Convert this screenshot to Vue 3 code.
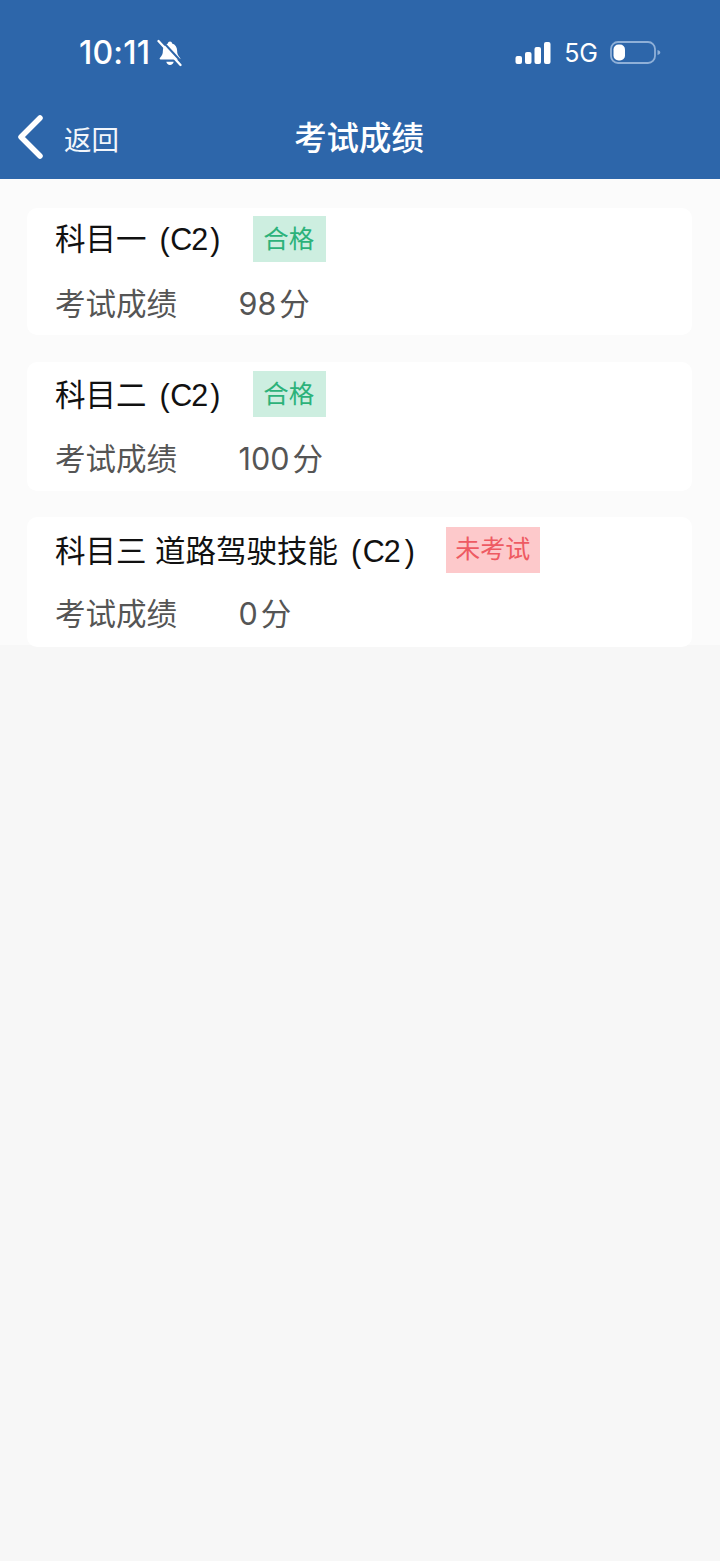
<script setup>
const items = [
  { name: '科目一', tag: '合格', ok: true, score: '98' },
  { name: '科目二', tag: '合格', ok: true, score: '100' },
  { name: '科目三 道路驾驶技能', tag: '未考试', ok: false, score: '0' },
]
</script>

<template>
  <div class="page">
    <header class="head">
      <div class="status">
        <div class="status-left">
          <span class="time">10:11</span>
          <svg class="bell" width="26" height="28" viewBox="0 0 26 28">
            <path d="M13 2.500c1.200 0 2 .8 2.100 1.900 3.400 1 5 3.600 5 7.200 0 3.600 1 5.300 3 7.400.6.700.2 1.500-.7 1.500H3.600c-.9 0-1.300-.8-.7-1.500 2-2.100 3-3.800 3-7.400 0-3.600 1.600-6.200 5-7.200C11 3.300 11.800 2.500 13 2.500z" fill="#fff"/>
            <path d="M9.300 22.800h7.400c-.3 1.900-1.800 3.200-3.700 3.200s-3.400-1.300-3.700-3.200z" fill="#fff"/>
            <path d="M3.800 0.500 25.500 24" stroke="#2d66aa" stroke-width="2"/>
            <path d="M1.500 2 23.500 26" stroke="#fff" stroke-width="2.300" stroke-linecap="round"/>
          </svg>
        </div>
        <div class="status-right">
          <svg class="signal" width="36" height="22" viewBox="0 0 36 22">
            <rect x="0.500" y="14" width="6.500" height="8" rx="2" fill="#fff"/>
            <rect x="10" y="10" width="6.500" height="12" rx="2" fill="#fff"/>
            <rect x="19.500" y="5" width="6.500" height="17" rx="2" fill="#fff"/>
            <rect x="29" y="0" width="6.500" height="22" rx="2" fill="#fff"/>
          </svg>
          <span class="net">5G</span>
          <svg class="batt" width="52" height="26" viewBox="0 0 52 26">
            <rect x="1" y="2" width="44" height="21" rx="7" fill="none" stroke="#8fb0d8" stroke-width="1.800"/>
            <rect x="3.500" y="4.500" width="11.500" height="16" rx="5" fill="#fff"/>
            <path d="M47.500 10c1.800.6 2.800 1.500 2.800 2.500s-1 1.900-2.800 2.500z" fill="#8fb0d8"/>
          </svg>
        </div>
      </div>
      <div class="nav">
        <div class="back">
          <svg width="30" height="48" viewBox="0 0 30 48">
            <path d="M25 6 6 25 25 44" fill="none" stroke="#fff" stroke-width="5.500" stroke-linecap="round" stroke-linejoin="round"/>
          </svg>
          <span class="back-text">返回</span>
        </div>
        <h1 class="title">考试成绩</h1>
      </div>
    </header>

    <main class="list">
      <section v-for="item in items" :key="item.name" class="card">
        <div class="row-top">
          <span class="name">{{ item.name }}<span class="paren-l">(</span><span class="grade">C2</span><span class="paren-r">)</span></span>
          <span class="tag" :class="item.ok ? 'tag-ok' : 'tag-no'">{{ item.tag }}</span>
        </div>
        <div class="row-score">
          <span class="label">考试成绩</span>
          <span class="score"><span class="num">{{ item.score }}</span>分</span>
        </div>
      </section>
    </main>
  </div>
</template>

<style>
html, body { margin: 0; background: #f7f7f7; }
</style>

<style scoped>
.page {
  width: 720px;
  height: 1561px;
  overflow: hidden;
  background: #f7f7f7;
  font-family: "Noto Sans CJK SC", "Liberation Sans", sans-serif;
  display: flex;
  flex-direction: column;
}
.head {
  height: 179px;
  flex: none;
  background: #2d66aa;
  color: #fff;
}
.status {
  height: 94px;
  padding: 33px 58px 0 79px;
  box-sizing: border-box;
  display: flex;
  justify-content: space-between;
  align-items: flex-start;
}
.status-left, .status-right { display: flex; align-items: center; height: 40px; }
.time {
  font-family: Inter, "Liberation Sans", sans-serif;
  font-size: 32px;
  font-weight: 500;
  letter-spacing: 0.200px;
  line-height: 40px;
}
.bell { margin-left: 7px; }
.net {
  font-family: Inter, "Liberation Sans", sans-serif;
  font-size: 25px;
  line-height: 40px;
  margin: 0 12px 0 13px;
}
.nav {
  position: relative;
  height: 85px;
  display: flex;
  align-items: center;
  justify-content: center;
}
.back {
  position: absolute;
  left: 15px;
  top: 18px;
  display: flex;
  align-items: center;
}
.back-text {
  font-size: 27.500px;
  line-height: 40px;
  margin-left: 19px;
  margin-top: 4px;
  color: #f2f6fb;
}
.title {
  margin: 0 2px 2px 0;
  font-size: 32.400px;
  font-weight: 500;
  line-height: 44px;
}
.list {
  flex: none;
  height: 466px;
  background: #fbfbfb;
  padding: 29px 28px 0 27px;
  box-sizing: border-box;
  display: flex;
  flex-direction: column;
  gap: 27px;
}
.card {
  height: 127px;
  flex: none;
  background: #fff;
  border-radius: 10px;
  padding: 8px 28px 0;
  box-sizing: border-box;
}
.card:nth-child(2) { height: 129px; padding-top: 9px; }
.card:nth-child(3) { height: 130px; padding-top: 10px; margin-top: -1px; }
.row-top {
  display: flex;
  align-items: center;
  height: 46px;
}
.name {
  font-family: "Liberation Sans", "Noto Sans CJK SC", sans-serif;
  font-size: 30.500px;
  color: #111;
  line-height: 46px;
  margin-right: 30px;
  position: relative;
  top: 0;
}
.card:nth-child(n+2) .name { top: 1px; }
.card:nth-child(3) .name { margin-right: 28px; }
.card:nth-child(3) .paren-l { margin-right: 1.500px; }
.card:nth-child(3) .paren-r { margin-left: 5px; }
.grade { letter-spacing: -1px; }
.paren-l { margin: 0 0.500px 0 13px; font-weight: 300; }
.paren-r { margin: 0 3px 0 3px; font-weight: 300; }
.tag {
  height: 46px;
  line-height: 41px;
  padding: 0 12px 0 10px;
  font-size: 25.500px;
}
.card:nth-child(3) .tag { padding: 0 10px 0 9.500px; font-size: 25px; }
.tag-ok { background: #cdeee0; color: #2cb27a; }
.tag-no { background: #fdc9cb; color: #ee5a62; }
.row-score {
  display: flex;
  align-items: center;
  height: 46px;
  margin-top: 17px;
  color: #555;
  font-size: 30.500px;
}
.card:nth-child(3) .row-score { margin-top: 16px; }
.label { width: 184px; flex: none; }
.num {
  font-family: Inter, "Liberation Sans", sans-serif;
  font-size: 30.500px;
  margin-right: 3px;
  margin-left: -0.500px;
}
</style>
